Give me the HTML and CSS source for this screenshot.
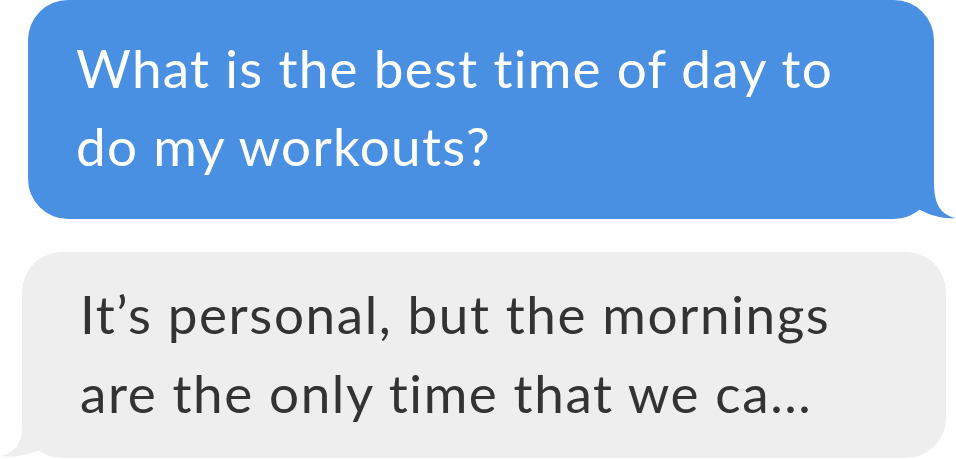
FILE: index.html
```html
<!DOCTYPE html>
<html>
<head>
<meta charset="utf-8">
<link rel="stylesheet" href="styles.css">
</head>
<body>
<div class="thread">
  <div class="bubble sent">
    <p class="msg">What is the best time of day to<br>do my workouts?</p>
    <svg class="tail tail-right" width="60" height="60" viewBox="0 0 60 60" aria-hidden="true">
      <path d="M10,0 L38,0 L38,23 C38,45 44,55 59,59 C48,60 36,57 24,51 L10,40 Z" fill="#4a90e2"/>
    </svg>
  </div>
  <div class="bubble received">
    <p class="msg">It’s personal, but the mornings<br>are the only time that we ca...</p>
    <svg class="tail tail-left" width="60" height="60" viewBox="0 0 60 60" aria-hidden="true">
      <path d="M50,0 L22,0 L22,27 C22,46 16,54 1,58 C14,60 28,57 42,51 L50,42 Z" fill="#eeeeee"/>
    </svg>
  </div>
</div>
</body>
</html>
```
FILE: styles.css
```css
html, body {
  margin: 0;
  padding: 0;
  background: #ffffff;
}
.thread {
  display: flex;
  flex-direction: column;
  gap: 33px;
  width: 956px;
}
.bubble {
  position: relative;
  border-radius: 40px;
  box-sizing: border-box;
}
.sent {
  background: #4a90e2;
  color: #ffffff;
  margin-left: 28px;
  width: 906px;
  height: 219px;
  padding: 29px 0 0 48px;
}
.sent .msg {
  line-height: 78px;
  letter-spacing: 1.3px;
}
.received {
  background: #eeeeee;
  color: #333333;
  margin-left: 22px;
  width: 924px;
  height: 206px;
  padding: 22px 0 0 58px;
}
.received .msg {
  line-height: 79px;
  letter-spacing: 1.6px;
}
.msg {
  margin: 0;
  font-family: Lato, "Open Sans", sans-serif;
  font-size: 53px;
  font-variant-ligatures: none;
  white-space: nowrap;
}
.tail {
  position: absolute;
  display: block;
}
.tail-right {
  right: -22px;
  bottom: 0;
}
.tail-left {
  left: -22px;
  bottom: 0;
}
```
